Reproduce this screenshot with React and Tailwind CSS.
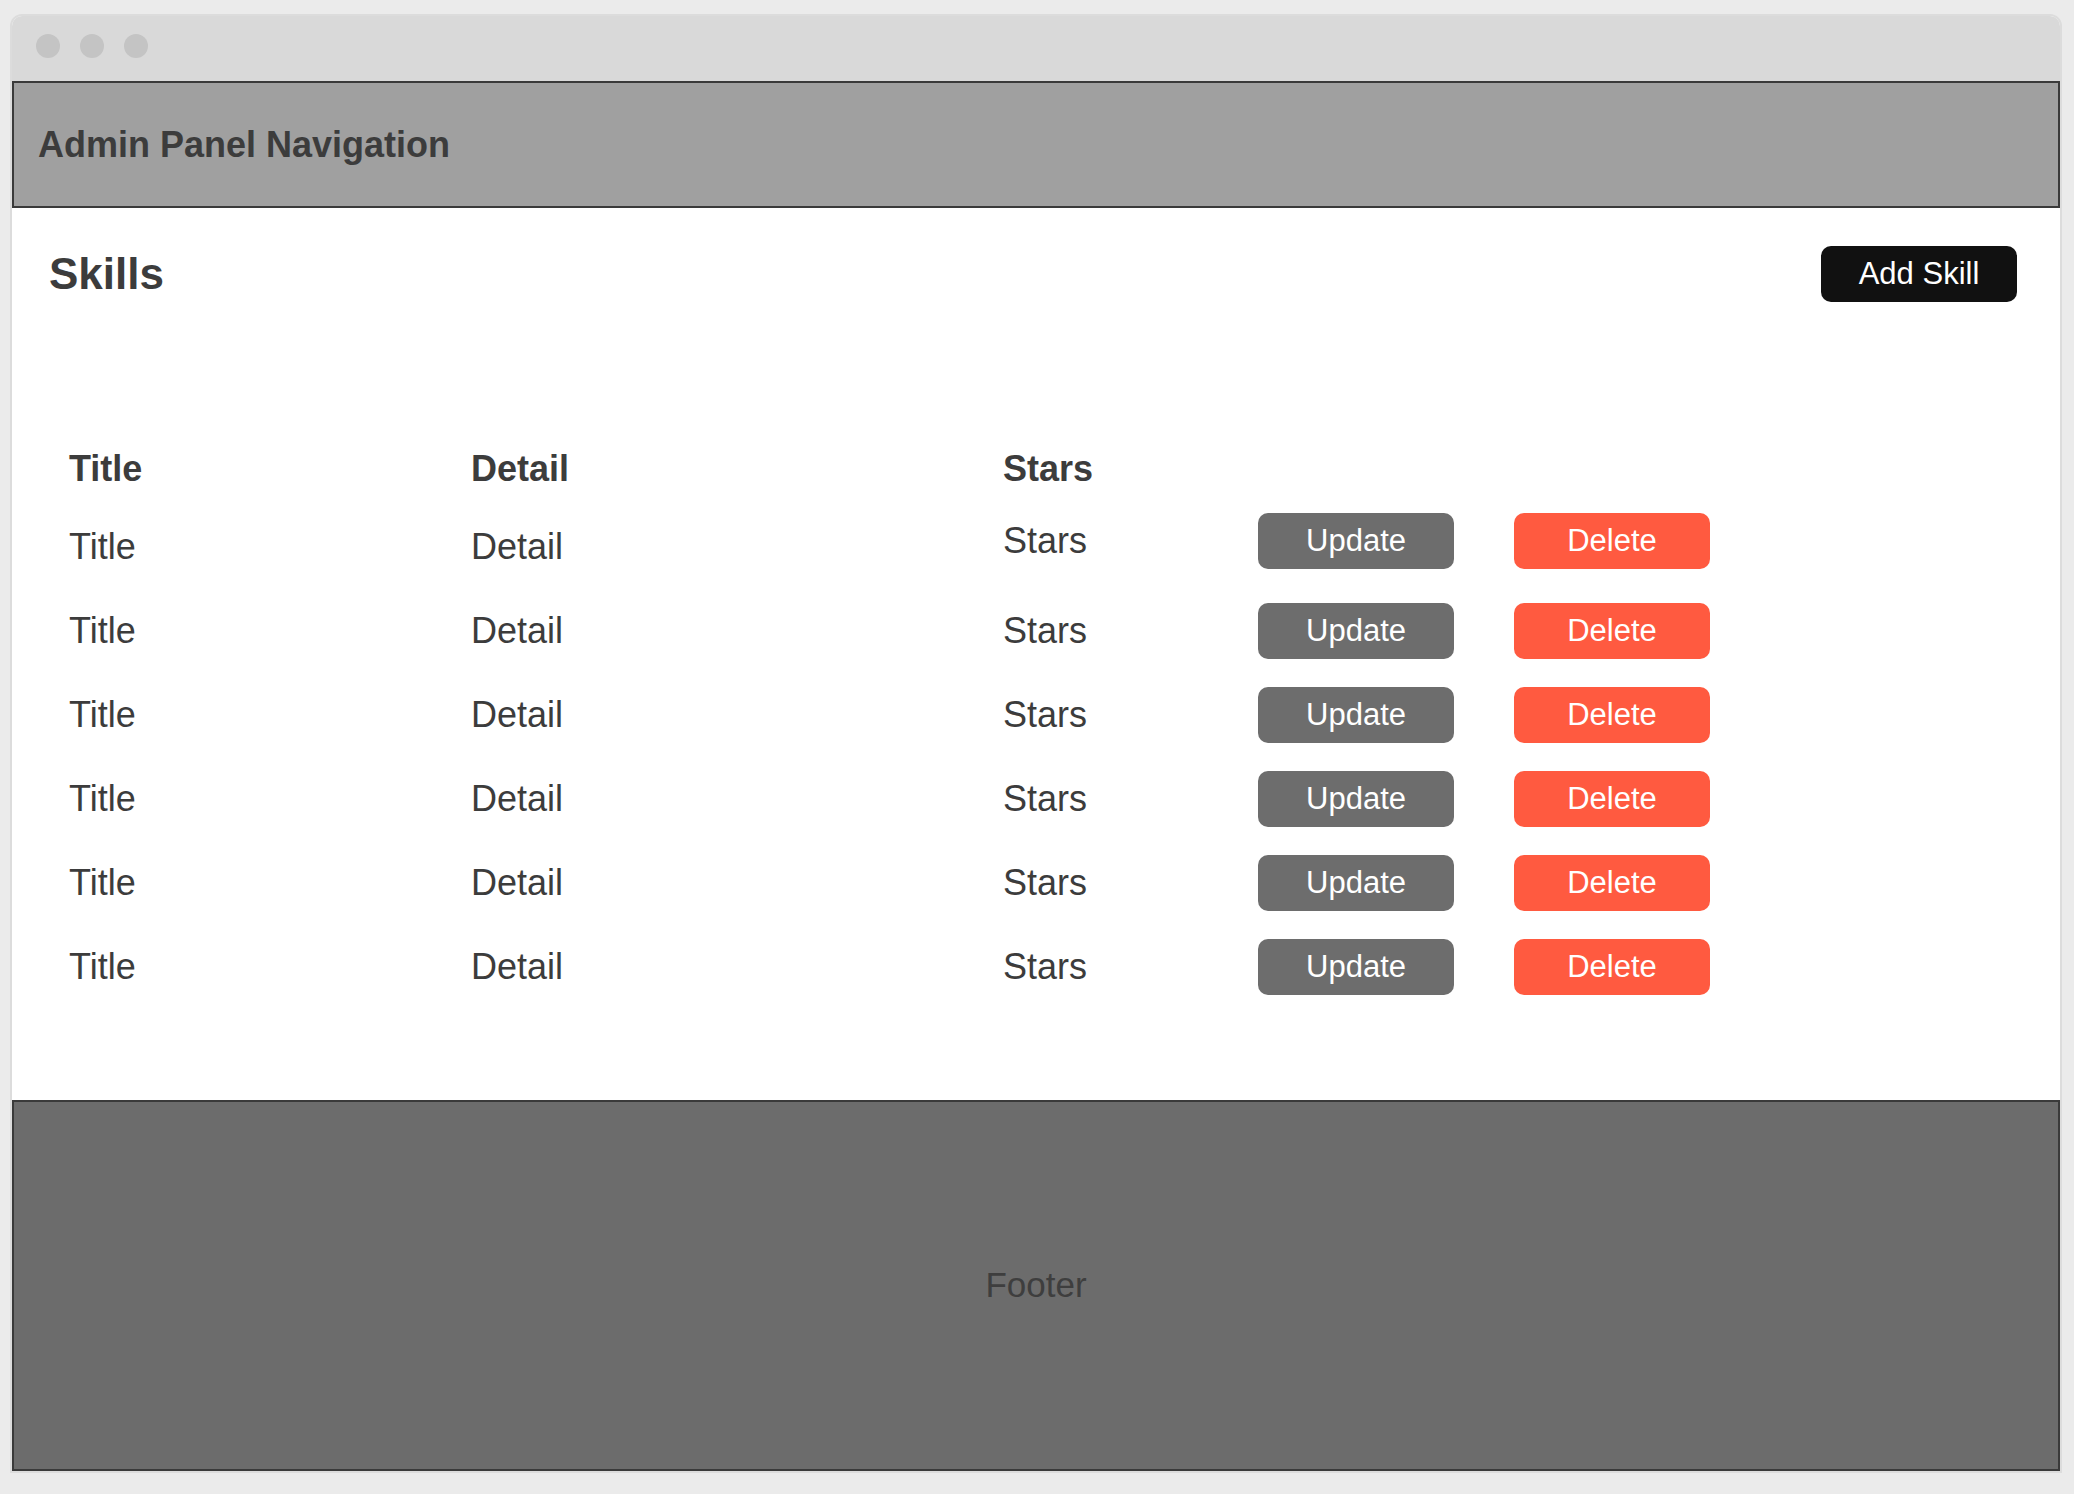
import React from 'react';

const rows = [1, 2, 3, 4, 5, 6];

function Row({ first }) {
  return (
    <div className={`flex items-center ${first ? 'h-[90px] pb-[6px]' : 'h-[84px]'}`}>
      <div className={`w-[402px] text-[36px] ${first ? 'pt-[12px]' : ''}`}>Title</div>
      <div className={`w-[532px] text-[36px] ${first ? 'pt-[12px]' : ''}`}>Detail</div>
      <div className="w-[255px] text-[36px]">Stars</div>
      <button className="w-[196px] h-[56px] rounded-[10px] bg-[#6d6d6d] text-white text-[31px]">
        Update
      </button>
      <button className="ml-[60px] w-[196px] h-[56px] rounded-[10px] bg-[#ff5a40] text-white text-[31px]">
        Delete
      </button>
    </div>
  );
}

export default function App() {
  return (
    <div
      className="min-h-[1494px] bg-[#ebebeb] pt-[14px] pl-[10px] text-[#3c3c3c]"
      style={{ fontFamily: '"Liberation Sans", Arial, sans-serif' }}
    >
      <div className="w-[2052px] border-2 border-[#dcdcdc] rounded-t-[12px] bg-white overflow-hidden">
        {/* window chrome */}
        <div className="h-[65px] bg-[#d9d9d9] flex items-center gap-[20px] pl-[24px] pb-[5px]">
          <span className="w-[24px] h-[24px] rounded-full bg-[#c4c4c4]" />
          <span className="w-[24px] h-[24px] rounded-full bg-[#c4c4c4]" />
          <span className="w-[24px] h-[24px] rounded-full bg-[#c4c4c4]" />
        </div>

        <nav className="h-[127px] border-2 border-[#3a3a3a] bg-[#a0a0a0] flex items-center pl-[24px]">
          <h1 className="text-[36px] font-bold">Admin Panel Navigation</h1>
        </nav>

        <main className="h-[892px]">
          <div className="flex items-center justify-between pt-[33px] pl-[37px] pr-[43px]">
            <h2 className="text-[44px] font-bold">Skills</h2>
            <button className="w-[196px] h-[56px] rounded-[10px] bg-[#111111] text-white text-[31px]">
              Add Skill
            </button>
          </div>

          <div className="mt-[132px] pl-[57px]">
            <div className="flex items-center h-[60px] text-[36px] font-bold">
              <div className="w-[402px]">Title</div>
              <div className="w-[532px]">Detail</div>
              <div className="w-[255px]">Stars</div>
            </div>
            {rows.map((r) => (
              <Row key={r} first={r === 1} />
            ))}
          </div>
        </main>

        <footer className="h-[371px] border-2 border-[#3a3a3a] bg-[#6c6c6c] flex items-center justify-center">
          <span className="text-[35px] text-[#3e3e3e]">Footer</span>
        </footer>
      </div>
    </div>
  );
}
